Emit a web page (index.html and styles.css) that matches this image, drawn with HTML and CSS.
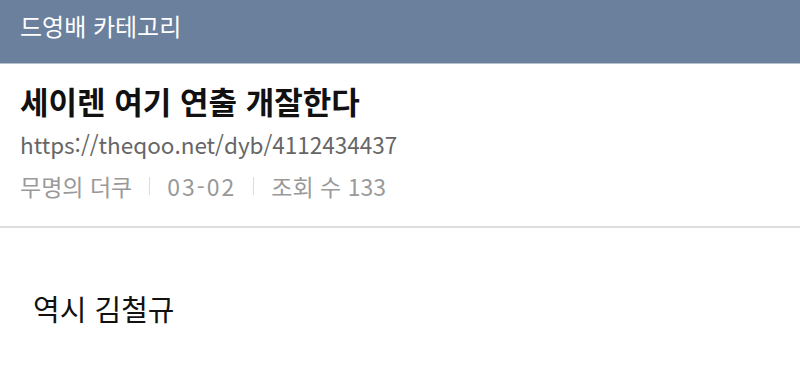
FILE: index.html
```html
<!DOCTYPE html>
<html lang="ko">
<head>
<meta charset="utf-8">
<link rel="stylesheet" href="styles.css">
</head>
<body>
<header class="topbar">드영배 카테고리</header>
<section class="post-head">
  <h1 class="title">세이렌 여기 연출 개잘한다</h1>
  <div class="url">https://theqoo.net/dyb/4112434437</div>
  <div class="meta">
    <span>무명의 더쿠</span>
    <span class="sep"></span>
    <span class="date">03-02</span>
    <span class="sep"></span>
    <span>조회 수 133</span>
  </div>
</section>
<article class="post-body">역시 김철규</article>
</body>
</html>
```

FILE: styles.css
```css
html, body {
  margin: 0;
  padding: 0;
  background: #ffffff;
  font-family: "Noto Sans CJK KR", "Noto Sans", sans-serif;
}
.topbar {
  height: 64px;
  background: #6b809d;
  color: #ffffff;
  font-size: 24px;
  line-height: 52px;
  padding-left: 20px;
  border-bottom: 1px solid #b8c0cc;
  box-sizing: border-box;
}
.post-head {
  padding: 16px 20px 0;
  height: 164px;
  box-sizing: border-box;
  border-bottom: 2px solid #dddddd;
}
.title {
  margin: 0;
  font-size: 31px;
  font-weight: 700;
  line-height: 42px;
  color: #111111;
}
.url {
  margin-top: 2px;
  font-size: 22.5px;
  line-height: 40px;
  color: #666666;
}
.meta {
  margin-top: 2px;
  display: flex;
  align-items: center;
  gap: 17px;
  font-size: 23px;
  line-height: 40px;
  color: #999999;
}
.date {
  letter-spacing: 2px;
}
.sep {
  width: 1px;
  height: 18px;
  background: #dddddd;
}
.post-body {
  padding: 60px 33px;
  font-size: 29px;
  line-height: 40px;
  color: #111111;
}
```
